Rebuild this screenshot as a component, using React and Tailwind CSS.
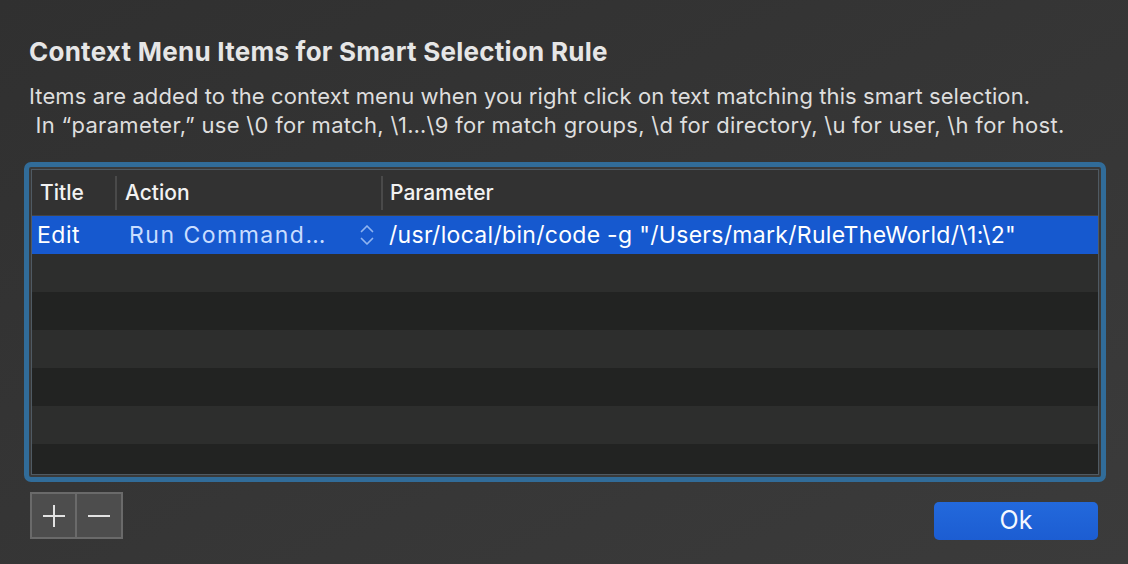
import React from 'react';

const rows = [
  { title: 'Edit', action: 'Run Command…', parameter: '/usr/local/bin/code -g "/Users/mark/RuleTheWorld/\\1:\\2"', selected: true },
  {}, {}, {}, {}, {}, {},
];

const Chevrons = () => (
  <svg width="16" height="24" viewBox="0 0 16 24" fill="none" stroke="#8fb4f0" strokeWidth="1.7" strokeLinecap="round" strokeLinejoin="round">
    <path d="M2.5 8.5 L8 3 L13.5 8.5" />
    <path d="M2.5 15.5 L8 21 L13.5 15.5" />
  </svg>
);

const App = () => {
  return (
    <div
      className="w-[1128px] h-[564px] overflow-hidden bg-gradient-to-br from-[#303030] to-[#3b3b3b] text-[#e4e4e4] flex flex-col"
      style={{ fontFamily: 'Inter, "Noto Sans", sans-serif' }}
    >
      <div className="pl-[29px] pt-[36px]">
        <h1 className="text-[26px] leading-[32px] font-bold text-[#e6e6e6] tracking-[0.25px]">
          Context Menu Items for Smart Selection Rule
        </h1>
        <p className="mt-[14px] text-[22px] leading-[29px] text-[#dedede] tracking-[0.1px]">
          Items are added to the context menu when you right click on text matching this smart selection.
          <br />
          <span className="tracking-[0.3px]">&nbsp;In “parameter,” use \0 for match, \1…\9 for match groups, \d for directory, \u for user, \h for host.</span>
        </p>
      </div>

      {/* table */}
      <div className="ml-[24px] mt-[22px] w-[1082px] h-[320px] shrink-0 rounded-[7px] border-[5px] border-[#316c99] bg-[#3a3a3a] p-[2px] flex flex-col">
        <div className="flex-1 flex flex-col border border-[#4f5a63] bg-[#222322] overflow-hidden">
          <div className="h-[46px] shrink-0 flex items-center bg-[#323232] border-b border-[#454545] text-[21px] font-medium text-[#f2f2f2]">
            <div className="w-[83px] pl-[8px]">Title</div>
            <div className="h-[34px] w-[2px] bg-[#4a4a4a]" />
            <div className="w-[264px] pl-[8px]">Action</div>
            <div className="h-[34px] w-[2px] bg-[#4a4a4a]" />
            <div className="pl-[7px]">Parameter</div>
          </div>
          {rows.map((r, i) => (
            <div
              key={i}
              className={
                'h-[38px] shrink-0 flex items-center text-[23px] ' +
                (r.selected ? 'bg-[#1659cf] text-white' : i % 2 === 1 ? 'bg-[#2d2e2d]' : 'bg-[#222322]')
              }
            >
              {r.selected && (
                <>
                  <div className="w-[85px] pl-[5px] tracking-[0.5px]">{r.title}</div>
                  <div className="w-[266px] pl-[12px] pr-[8px] flex items-center justify-between text-[#c9ddff]">
                    <span className="tracking-[1.5px]">{r.action}</span>
                    <Chevrons />
                  </div>
                  <div className="pl-[6px] whitespace-nowrap tracking-[0.3px]">{r.parameter}</div>
                </>
              )}
            </div>
          ))}
        </div>
      </div>

      {/* bottom */}
      <div className="flex items-start justify-between pl-[30px] pr-[30px] mt-[10px]">
        <div className="flex h-[47px] border-[2px] border-[#6a6a6a] bg-[#4d4d4d]">
          <button className="w-[45px] flex items-center justify-center border-r-[2px] border-[#6a6a6a]">
            <svg width="22" height="22" viewBox="0 0 22 22" stroke="#e2e2e2" strokeWidth="2">
              <path d="M11 0 V22 M0 11 H22" />
            </svg>
          </button>
          <button className="w-[44px] flex items-center justify-center">
            <svg width="22" height="22" viewBox="0 0 22 22" stroke="#e2e2e2" strokeWidth="2">
              <path d="M0 11 H22" />
            </svg>
          </button>
        </div>
        <button className="mt-[10px] w-[164px] h-[38px] rounded-[5px] bg-gradient-to-b from-[#2369dc] to-[#1c5dd2] text-[25px] text-[#f4f8ff] flex items-center justify-center">
          Ok
        </button>
      </div>
    </div>
  );
};

export default App;
